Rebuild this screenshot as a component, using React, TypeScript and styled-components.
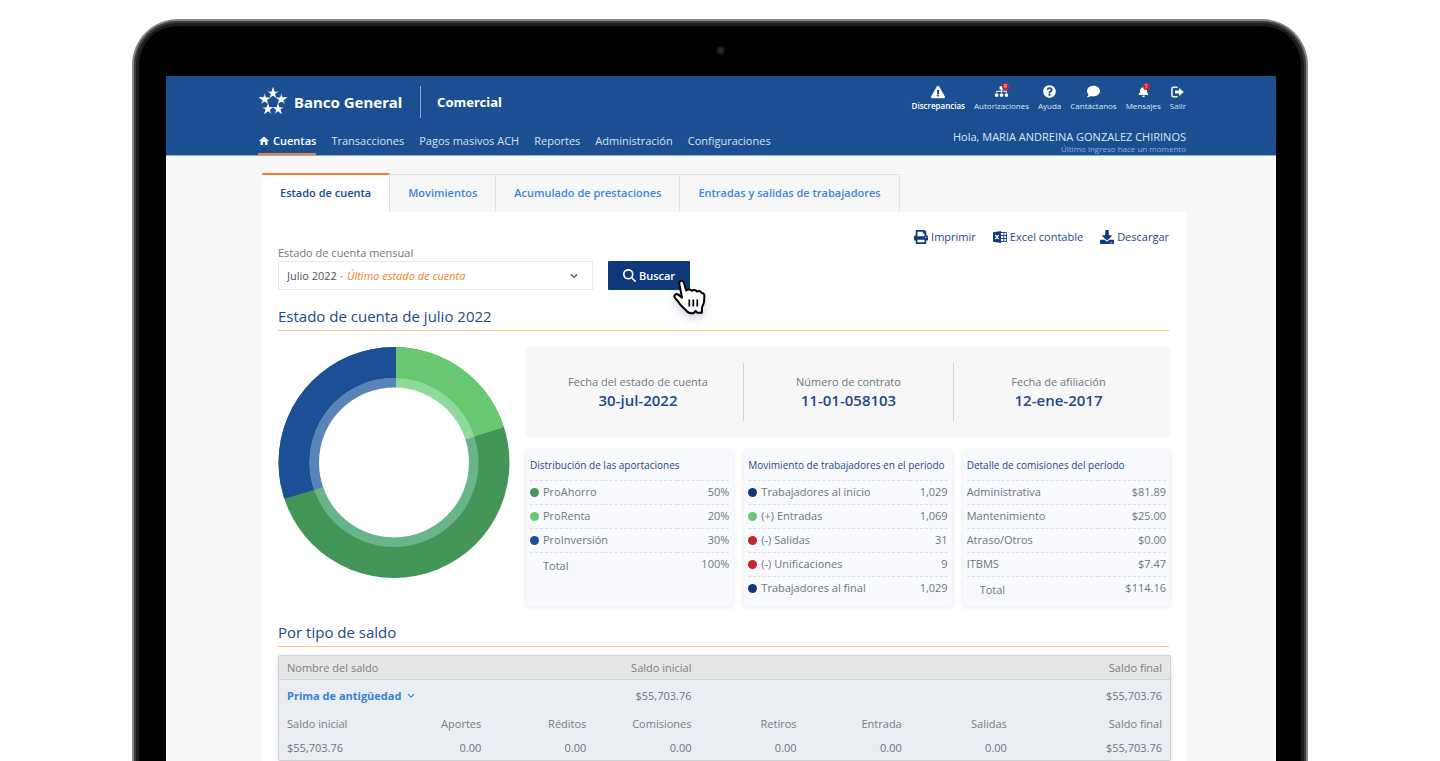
import React from "react";
import styled, { createGlobalStyle, css } from "styled-components";
import {
  FaBell,
  FaChevronDown,
  FaComment,
  FaDownload,
  FaExclamationTriangle,
  FaPrint,
  FaQuestionCircle,
  FaSitemap,
} from "react-icons/fa";
import { FaMagnifyingGlass } from "react-icons/fa6";
import { MdHome } from "react-icons/md";

const color = {
  header: "#1c4f92",
  navy: "#10397c",
  title: "#21498b",
  link: "#3f85dc",
  orange: "#f0802f",
  rule: "#f6c67a",
  text: "#6d7780",
  page: "#f7f7f7",
  greenDark: "#449558",
  green: "#68c872",
  blue: "#1c5096",
  red: "#c1272d",
};

const GlobalStyle = createGlobalStyle`
  * { box-sizing: border-box; }
  body {
    margin: 0;
    background: #fff;
    color: ${color.text};
    font-family: "Open Sans", "Noto Sans", sans-serif;
    font-size: 11px;
    line-height: 16px;
  }
  a { color: inherit; text-decoration: none; }
  h1, h2, h3, p { margin: 0; font-weight: 400; }
  button, select { font: inherit; }
  table { border-collapse: separate; border-spacing: 0; }
  svg { display: block; flex: none; }
`;

/* ---------- laptop frame ---------- */

const Stage = styled.div`
  display: flex;
  height: 100vh;
  min-height: 400px;
  overflow: hidden;
  padding: 19px 132px 0;
`;

const Laptop = styled.div`
  flex: 1;
  min-width: 0;
  display: flex;
  flex-direction: column;
  margin-bottom: -8px;
  padding: 0 30px 0 32px;
  border: solid #84878a;
  border-width: 2px 2px 0;
  border-radius: 46px 46px 0 0;
  background: #000;
  box-shadow: inset 0 0 0 2px #3a3d40, inset 0 0 0 5px #1a1d1e;
`;

const Bezel = styled.div`
  flex: none;
  display: flex;
  align-items: center;
  justify-content: center;
  height: 55px;
  padding: 4px 2px 0 0;
`;

const Camera = styled.span`
  width: 9px;
  height: 9px;
  border-radius: 50%;
  border: 2px solid #141517;
  background: #25282c;
`;

const Screen = styled.div`
  flex: 1;
  min-height: 0;
  overflow: hidden;
  background: ${color.page};
`;

/* ---------- header ---------- */

const Header = styled.header`
  display: flex;
  justify-content: space-between;
  height: 80px;
  padding: 0 90px 0 92px;
  background: ${color.header};
  border-bottom: 1px solid #8fb0d8;
  color: #fff;
`;

const HeaderLeft = styled.div`
  display: flex;
  flex-direction: column;
  justify-content: space-between;
  padding-top: 10px;
`;

const Brand = styled.div`
  display: flex;
  align-items: center;
  height: 32px;
  font-family: "Noto Sans", sans-serif;
  font-weight: 700;
`;

const BrandName = styled.span`
  margin-left: 6px;
  padding-right: 18px;
  border-right: 1px solid #8ba7c9;
  font-size: 15px;
  line-height: 32px;
`;

const BrandArea = styled.span`
  margin-left: 16px;
  font-size: 13px;
`;

const Nav = styled.nav`
  display: flex;
  gap: 15px;
`;

const NavLink = styled.a<{ $active?: boolean }>`
  display: flex;
  align-items: center;
  gap: 3px;
  height: 28px;
  padding-top: 2px;
  border-bottom: 2px solid ${(p) => (p.$active ? color.orange : "transparent")};
  color: ${(p) => (p.$active ? "#fff" : "#d5e0ef")};
  font-weight: ${(p) => (p.$active ? 600 : 400)};
`;

const HeaderRight = styled.div`
  display: flex;
  flex-direction: column;
  align-items: flex-end;
  padding-top: 9px;
`;

const Tools = styled.div`
  display: flex;
  gap: 9px;
`;

const Tool = styled.a<{ $strong?: boolean }>`
  display: flex;
  flex-direction: column;
  align-items: center;
  gap: 2px;
  color: ${(p) => (p.$strong ? "#fff" : "#dbe5f1")};
  font-size: 8px;
  font-weight: ${(p) => (p.$strong ? 600 : 400)};
  line-height: 12px;
`;

const ToolIcon = styled.span`
  position: relative;
  display: flex;
  align-items: center;
  height: 13px;
  color: #fff;
  font-size: 13px;
`;

const Badge = styled.span`
  position: absolute;
  top: -2px;
  right: -1px;
  width: 7px;
  height: 7px;
  border-radius: 50%;
  background: #cc2630;
  color: #fff;
  font-size: 5px;
  line-height: 7px;
  text-align: center;
`;

const Greeting = styled.p`
  margin-top: 18px;
  color: #dbe5f1;
  line-height: 14px;
`;

const LastLogin = styled.p`
  color: #8fb0d8;
  font-size: 8px;
  line-height: 9px;
`;

/* ---------- tabs and panel ---------- */

const Main = styled.main`
  padding: 17px 89px 0 96px;
`;

const Tabs = styled.nav`
  display: flex;
  align-items: flex-end;
`;

const Tab = styled.a<{ $active?: boolean }>`
  height: 38px;
  padding: 0 18px;
  border: solid #dfe1e8;
  border-width: 1px 1px 0 0;
  color: ${color.link};
  font-weight: 600;
  line-height: 36px;
  ${(p) =>
    p.$active &&
    css`
      height: 39px;
      border-top: 2px solid ${color.orange};
      border-radius: 1px 1px 0 0;
      background: #fff;
      color: ${color.title};
    `}
`;

const Panel = styled.section`
  padding: 17px 16px 40px;
  background: #fff;
`;

const Actions = styled.div`
  display: flex;
  justify-content: flex-end;
  gap: 17px;
  margin-right: 2px;
`;

const Action = styled.a`
  display: flex;
  align-items: center;
  gap: 3px;
  color: ${color.title};
  svg {
    color: ${color.navy};
    font-size: 14px;
  }
`;

const FieldLabel = styled.label`
  display: block;
`;

const SearchForm = styled.form`
  display: flex;
  gap: 15px;
`;

const SelectBox = styled.div`
  position: relative;
  flex: 0 1 315px;
`;

const Select = styled.select`
  width: 100%;
  height: 29px;
  padding: 0 8px;
  appearance: none;
  border: 1px solid #e6e7e9;
  border-radius: 0;
  background: #fff;
  color: #4b545d;
`;

const SelectHint = styled.span`
  position: absolute;
  top: 0;
  left: 69px;
  color: ${color.orange};
  font-style: italic;
  line-height: 29px;
  pointer-events: none;
`;

const SelectArrow = styled(FaChevronDown)`
  position: absolute;
  top: 11px;
  right: 15px;
  color: #4b545d;
  font-size: 8px;
  pointer-events: none;
`;

const SearchButton = styled.button`
  position: relative;
  display: flex;
  align-items: center;
  justify-content: center;
  gap: 3px;
  width: 82px;
  height: 29px;
  padding: 0;
  border: 0;
  border-radius: 1px;
  background: ${color.navy};
  color: #fff;
  font-weight: 600;
`;

const Pointer = styled.svg`
  position: absolute;
  top: 18px;
  left: 64px;
  width: 36px;
  height: 38px;
  overflow: visible;
  filter: drop-shadow(0 4px 4px rgba(20, 40, 90, 0.2));
`;

const SectionTitle = styled.h2`
  margin: 16px 2px 0 0;
  padding-bottom: 4px;
  border-bottom: 1px solid ${color.rule};
  color: ${color.title};
  font-size: 15px;
  line-height: 20px;
`;

/* ---------- summary ---------- */

const Summary = styled.div`
  display: flex;
  align-items: flex-start;
  gap: 16px;
  margin: 16px 1px 0 0;
`;

const SummaryBody = styled.div`
  flex: 1;
  min-width: 0;
`;

const Facts = styled.dl`
  display: grid;
  grid-template-columns: repeat(3, 1fr);
  margin: 0;
  padding: 16px 7px;
  background: #f7f7f8;
`;

const Fact = styled.div`
  display: flex;
  flex-direction: column;
  justify-content: center;
  height: 58px;
  padding-bottom: 2px;
  text-align: center;
  & + & {
    border-left: 1px solid #d2d4d8;
  }
  dt {
    line-height: 18px;
  }
  dd {
    margin: 0;
    color: ${color.title};
    font-size: 15px;
    font-weight: 600;
    line-height: 18px;
  }
`;

const Cards = styled.div`
  display: grid;
  grid-template-columns: repeat(3, 1fr);
  gap: 11px;
  margin-top: 13px;
`;

const Card = styled.article`
  padding: 0 4px 6px;
  border-radius: 3px;
  background: #f8f9fd;
  box-shadow: 0 1px 5px rgba(40, 60, 100, 0.12);
`;

const CardTitle = styled.h3`
  color: ${color.title};
  font-size: 10px;
  line-height: 30px;
  white-space: nowrap;
`;

const CardTable = styled.table`
  width: 100%;
  th,
  td {
    height: 24px;
    padding: 0 0 1px;
    border-top: 1px dashed #dcdfe5;
    font-weight: 400;
    text-align: left;
    white-space: nowrap;
  }
  td {
    text-align: right;
  }
`;

const RowLabel = styled.span<{ $total?: boolean }>`
  display: flex;
  align-items: center;
  gap: 4px;
  padding: ${(p) => (p.$total ? "3px 0 0 13px" : "0")};
`;

const Dot = styled.i<{ $color: string }>`
  width: 9px;
  height: 9px;
  border-radius: 50%;
  background: ${(p) => p.$color};
`;

/* ---------- balances ---------- */

const Balances = styled.table`
  width: 100%;
  margin-top: 8px;
  table-layout: fixed;
  border: 1px solid #cfd1d5;
  border-radius: 2px;
  background: #eaedf2;
  box-shadow: 0 1px 5px rgba(40, 60, 100, 0.15);
  th,
  td {
    padding: 0;
    text-align: right;
    white-space: nowrap;
  }
  th {
    color: #7a7e84;
    font-weight: 500;
  }
  th:first-child,
  td:first-child {
    padding-left: 8px;
    text-align: left;
  }
  th:last-child,
  td:last-child {
    padding-right: 8px;
  }
`;

const HeadRow = styled.tr`
  height: 24px;
  th {
    border-bottom: 1px solid #cfd1d5;
    background: #e6e6e6;
  }
`;

const BodyRow = styled.tr<{ $height: number }>`
  height: ${(p) => p.$height}px;
`;

const Toggle = styled.button`
  display: flex;
  align-items: center;
  gap: 6px;
  padding: 0;
  border: 0;
  background: none;
  color: #3a7fd8;
  font-weight: 700;
`;

/* ---------- drawings ---------- */

const StarLogo = () => (
  <svg width="30" height="30" viewBox="-15 -15 30 30" aria-hidden="true">
    {[0, 72, 144, 216, 288].map((angle) => (
      <g key={angle} transform={`rotate(${angle}) translate(0 -8.8)`}>
        <path
          d="M0-6 1-1.800 6-2 2 .700 3.800 5.400 0 2.400-3.800 5.400-2 .700-6-2-1-1.800Z"
          fill="#fff"
          fillOpacity="0.55"
        />
        <path d="M0-6.400 1.600-1.300 3.800-1.200 2 .700 2.800 4.200 0 2.400-2.800 4.200-2 .700-3.800-1.200-1.600-1.300Z" fill="#fff" />
      </g>
    ))}
  </svg>
);

const ExcelIcon = () => (
  <svg width="14" height="12" viewBox="0 0 14 12" aria-hidden="true">
    <path d="M0 1.200 8 0v12L0 10.800Z" fill="currentColor" />
    <path d="m2.300 4 3.400 4.200M5.700 4 2.300 8.200" stroke="#fff" strokeWidth="1.200" />
    <path d="M8 1.500h5.500v9H8M8 4.500h5.500M8 7.500h5.500M10.800 1.500v9" fill="none" stroke="currentColor" strokeWidth="0.9" />
  </svg>
);

const ExitIcon = () => (
  <svg width="13" height="12" viewBox="0 0 13 12" aria-hidden="true">
    <path d="M6.500 1.200H2.400C1.500 1.200.900 1.800.900 2.700v6.600c0 .9.600 1.500 1.500 1.500h4.100" fill="none" stroke="#fff" strokeWidth="1.500" />
    <path d="M8 2 12.800 6 8 10V7.500H4v-3h4Z" fill="#fff" />
  </svg>
);

const ThinChevron = () => (
  <svg width="8" height="6" viewBox="0 0 8 6" aria-hidden="true">
    <path d="m1 1.200 3 3 3-3" fill="none" stroke="#3a7fd8" strokeWidth="1.200" />
  </svg>
);

const HandPointer = () => (
  <Pointer viewBox="0 0 36 38" aria-hidden="true">
    <path
      d="M7.300 4.600C7 1.400 11 .800 11.900 3.800l2.300 7.800c1.200-1.600 4.700-1.700 5.500.2 1.300-1.300 4.300-1.200 5.200.700 1.900-.9 4.100-.3 4.700 1.500 1.900.1 2.900 1.300 2.800 3.200l-.4 5.600c-.1 2.400-1.900 4-2.100 6.200v4.700h-4.700l-1.500-1.700-2.200 2.300c-4 .4-5.300-.2-7-2.500C12 29 8.500 26.600 6.600 23.200L3 18.800c-1.700-2.400.700-4.600 3.300-3.200l3.700 3Z"
      fill="#fff"
      stroke="#000"
      strokeWidth="2"
      strokeLinejoin="round"
    />
    <path d="M17.300 20.500v7M21.300 20.500v7M25.300 20.500v7" stroke="#000" strokeWidth="1.700" />
  </Pointer>
);

const Donut = () => (
  <svg width="232" height="232" viewBox="0 0 232 232" role="img" aria-label="Distribución de las aportaciones">
    <clipPath id="disc">
      <circle cx="116" cy="115.500" r="115.500" />
    </clipPath>
    <clipPath id="ring">
      <circle cx="116" cy="115.500" r="84.500" />
    </clipPath>
    <g clipPath="url(#disc)">
      <rect width="232" height="232" fill={color.greenDark} />
      <path d="M118 0H232V78.300L225.700 80.300 188 92.300 118 114.500Z" fill={color.green} />
      <path d="M118 0H0V153.700L6.700 151.700 44.700 140.300 118 118Z" fill={color.blue} />
    </g>
    <g clipPath="url(#ring)">
      <rect width="232" height="232" fill="#69b488" />
      <path d="M118 0H232V78.300L225.700 80.300 188 92.300 118 114.500Z" fill="#8fda9b" />
      <path d="M118 0H0V153.700L6.700 151.700 44.700 140.300 118 118Z" fill="#5a84b8" />
    </g>
    <circle cx="116" cy="115.500" r="75" fill="#fff" />
  </svg>
);

/* ---------- content ---------- */

const tools = [
  { label: "Discrepancias", icon: <FaExclamationTriangle size={14} />, strong: true },
  { label: "Autorizaciones", icon: <FaSitemap />, badge: "9" },
  { label: "Ayuda", icon: <FaQuestionCircle /> },
  { label: "Cantáctanos", icon: <FaComment /> },
  { label: "Mensajes", icon: <FaBell size={11} />, badge: "1" },
  { label: "Salir", icon: <ExitIcon /> },
];

const sections = ["Transacciones", "Pagos masivos ACH", "Reportes", "Administración", "Configuraciones"];

const tabs = ["Estado de cuenta", "Movimientos", "Acumulado de prestaciones", "Entradas y salidas de trabajadores"];

const facts = [
  ["Fecha del estado de cuenta", "30-jul-2022"],
  ["Número de contrato", "11-01-058103"],
  ["Fecha de afiliación", "12-ene-2017"],
];

type Row = { label: string; value: string; dot?: string; total?: boolean };

const cards: { title: string; rows: Row[] }[] = [
  {
    title: "Distribución de las aportaciones",
    rows: [
      { label: "ProAhorro", value: "50%", dot: color.greenDark },
      { label: "ProRenta", value: "20%", dot: color.green },
      { label: "ProInversión", value: "30%", dot: color.blue },
      { label: "Total", value: "100%", total: true },
    ],
  },
  {
    title: "Movimiento de trabajadores en el periodo",
    rows: [
      { label: "Trabajadores al inicio", value: "1,029", dot: color.navy },
      { label: "(+) Entradas", value: "1,069", dot: color.green },
      { label: "(-) Salidas", value: "31", dot: color.red },
      { label: "(-) Unificaciones", value: "9", dot: color.red },
      { label: "Trabajadores al final", value: "1,029", dot: color.navy },
    ],
  },
  {
    title: "Detalle de comisiones del período",
    rows: [
      { label: "Administrativa", value: "$81.89" },
      { label: "Mantenimiento", value: "$25.00" },
      { label: "Atraso/Otros", value: "$0.00" },
      { label: "ITBMS", value: "$7.47" },
      { label: "Total", value: "$114.16", total: true },
    ],
  },
];

const balanceColumns = ["10.9%", "11.8%", "11.8%", "11.8%", "11.8%", "11.8%", "11.8%", "18.3%"];
const movements = ["Saldo inicial", "Aportes", "Réditos", "Comisiones", "Retiros", "Entrada", "Salidas", "Saldo final"];
const amounts = ["$55,703.76", "0.00", "0.00", "0.00", "0.00", "0.00", "0.00", "$55,703.76"];

export default function App() {
  return (
    <>
      <GlobalStyle />
      <Stage>
        <Laptop>
          <Bezel>
            <Camera />
          </Bezel>
          <Screen>
            <Header>
              <HeaderLeft>
                <Brand>
                  <StarLogo />
                  <BrandName>Banco General</BrandName>
                  <BrandArea>Comercial</BrandArea>
                </Brand>
                <Nav>
                  <NavLink href="#cuentas" $active>
                    <MdHome size={12} />
                    Cuentas
                  </NavLink>
                  {sections.map((name) => (
                    <NavLink key={name} href="#">
                      {name}
                    </NavLink>
                  ))}
                </Nav>
              </HeaderLeft>
              <HeaderRight>
                <Tools>
                  {tools.map((tool) => (
                    <Tool key={tool.label} href="#" $strong={tool.strong}>
                      <ToolIcon>
                        {tool.icon}
                        {tool.badge && <Badge>{tool.badge}</Badge>}
                      </ToolIcon>
                      {tool.label}
                    </Tool>
                  ))}
                </Tools>
                <Greeting>Hola, MARIA ANDREINA GONZALEZ CHIRINOS</Greeting>
                <LastLogin>Último ingreso hace un momento</LastLogin>
              </HeaderRight>
            </Header>
            <Main>
              <Tabs>
                {tabs.map((name, i) => (
                  <Tab key={name} href="#" $active={i === 0}>
                    {name}
                  </Tab>
                ))}
              </Tabs>
              <Panel>
                <Actions>
                  <Action href="#">
                    <FaPrint />
                    Imprimir
                  </Action>
                  <Action href="#">
                    <ExcelIcon />
                    Excel contable
                  </Action>
                  <Action href="#">
                    <FaDownload />
                    Descargar
                  </Action>
                </Actions>
                <FieldLabel htmlFor="periodo">Estado de cuenta mensual</FieldLabel>
                <SearchForm onSubmit={(e) => e.preventDefault()}>
                  <SelectBox>
                    <Select id="periodo">
                      <option>Julio 2022 ·</option>
                    </Select>
                    <SelectHint>Último estado de cuenta</SelectHint>
                    <SelectArrow />
                  </SelectBox>
                  <SearchButton type="submit">
                    <FaMagnifyingGlass size={13} />
                    Buscar
                    <HandPointer />
                  </SearchButton>
                </SearchForm>

                <SectionTitle>Estado de cuenta de julio 2022</SectionTitle>
                <Summary>
                  <Donut />
                  <SummaryBody>
                    <Facts>
                      {facts.map(([name, value]) => (
                        <Fact key={name}>
                          <dt>{name}</dt>
                          <dd>{value}</dd>
                        </Fact>
                      ))}
                    </Facts>
                    <Cards>
                      {cards.map((card) => (
                        <Card key={card.title}>
                          <CardTitle>{card.title}</CardTitle>
                          <CardTable>
                            <tbody>
                              {card.rows.map((row) => (
                                <tr key={row.label}>
                                  <th scope="row">
                                    <RowLabel $total={row.total}>
                                      {row.dot && <Dot $color={row.dot} />}
                                      {row.label}
                                    </RowLabel>
                                  </th>
                                  <td>{row.value}</td>
                                </tr>
                              ))}
                            </tbody>
                          </CardTable>
                        </Card>
                      ))}
                    </Cards>
                  </SummaryBody>
                </Summary>

                <SectionTitle>Por tipo de saldo</SectionTitle>
                <Balances>
                  <colgroup>
                    {balanceColumns.map((width, i) => (
                      <col key={i} style={{ width }} />
                    ))}
                  </colgroup>
                  <thead>
                    <HeadRow>
                      <th colSpan={2}>Nombre del saldo</th>
                      <th colSpan={2}>Saldo inicial</th>
                      <th colSpan={4}>Saldo final</th>
                    </HeadRow>
                  </thead>
                  <tbody>
                    <BodyRow $height={31}>
                      <td colSpan={2}>
                        <Toggle type="button" aria-expanded="true">
                          Prima de antigüedad
                          <ThinChevron />
                        </Toggle>
                      </td>
                      <td colSpan={2}>$55,703.76</td>
                      <td colSpan={4}>$55,703.76</td>
                    </BodyRow>
                    <BodyRow $height={25}>
                      {movements.map((name) => (
                        <th key={name} scope="col">
                          {name}
                        </th>
                      ))}
                    </BodyRow>
                    <BodyRow $height={24}>
                      {amounts.map((amount, i) => (
                        <td key={i}>{amount}</td>
                      ))}
                    </BodyRow>
                  </tbody>
                </Balances>
              </Panel>
            </Main>
          </Screen>
        </Laptop>
      </Stage>
    </>
  );
}
